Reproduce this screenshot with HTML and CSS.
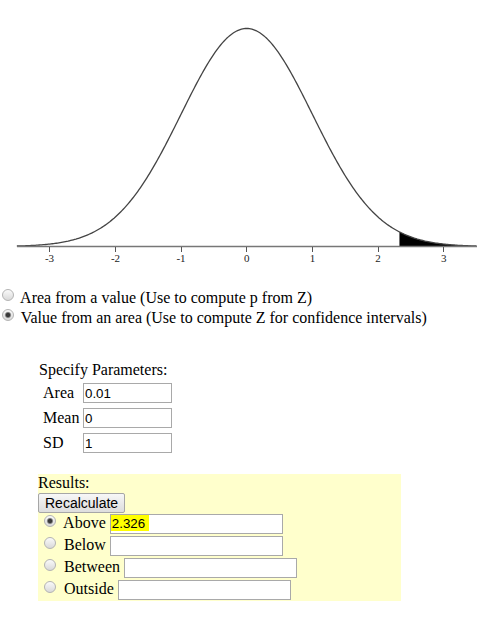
FILE: index.html
```html
<!DOCTYPE html>
<html lang="en">
<head>
  <meta charset="UTF-8">
  <title>Normal Distribution Calculator</title>
  <link rel="stylesheet" href="styles.css">
</head>
<body>
  <svg class="chart" width="489" height="288" id="chart">
    <path id="shade" class="shade" d=""></path>
    <path id="curve" class="curve" d=""></path>
    <line class="axis" x1="17" y1="246.5" x2="477" y2="246.5"></line>
    <g class="ticks">
      <line x1="49.5" y1="247" x2="49.5" y2="252"></line>
      <line x1="115.5" y1="247" x2="115.5" y2="252"></line>
      <line x1="181.5" y1="247" x2="181.5" y2="252"></line>
      <line x1="246.5" y1="247" x2="246.5" y2="252"></line>
      <line x1="312.5" y1="247" x2="312.5" y2="252"></line>
      <line x1="378.5" y1="247" x2="378.5" y2="252"></line>
      <line x1="443.5" y1="247" x2="443.5" y2="252"></line>
    </g>
    <g class="labels">
      <text x="49.5" y="262">-3</text>
      <text x="115.5" y="262">-2</text>
      <text x="181" y="262">-1</text>
      <text x="246.7" y="262">0</text>
      <text x="312.4" y="262">1</text>
      <text x="378" y="262">2</text>
      <text x="443.7" y="262">3</text>
    </g>
  </svg>

  <!-- mode -->
  <div class="modes">
    <label class="mode"><input type="radio" name="mode"> Area from a value (Use to compute p from Z)</label>
    <label class="mode"><input type="radio" name="mode" checked> Value from an area (Use to compute Z for confidence intervals)</label>
  </div>

  <!-- parameters -->
  <div class="params">
    <div class="caption">Specify Parameters:</div>
    <div class="param-grid">
      <span>Area</span><input type="text" value="0.01">
      <span>Mean</span><input type="text" value="0">
      <span>SD</span><input type="text" value="1">
    </div>
  </div>

  <!-- results -->
  <div class="results">
    <div class="caption">Results:</div>
    <button class="recalc">Recalculate</button>
    <label class="res"><input type="radio" name="res" checked> Above <input type="text" class="res-input found" value="2.326"></label>
    <label class="res"><input type="radio" name="res"> Below <input type="text" class="res-input"></label>
    <label class="res"><input type="radio" name="res"> Between <input type="text" class="res-input"></label>
    <label class="res"><input type="radio" name="res"> Outside <input type="text" class="res-input"></label>
  </div>

  <script>
    var cx = 246.7, unit = 65.67, base = 246.5, scale = 546.5;

    function px(z) { return cx + unit * z; }
    function py(z) { return base - scale * Math.exp(-z * z / 2) / Math.sqrt(2 * Math.PI); }

    function curvePath(from, to) {
      var d = '';
      for (var z = from; z <= to + 0.0001; z += 0.02) {
        d += (d ? ' L' : 'M') + px(z).toFixed(2) + ',' + py(z).toFixed(2);
      }
      return d;
    }

    document.getElementById('curve').setAttribute('d', curvePath(-3.5, 3.5));
    document.getElementById('shade').setAttribute('d',
      'M' + px(2.326).toFixed(2) + ',' + base + ' L' + curvePath(2.326, 3.5).slice(1) +
      ' L' + px(3.5).toFixed(2) + ',' + base + ' Z');
  </script>
</body>
</html>
```

FILE: styles.css
```css
body {
  margin: 0;
  font-family: "Liberation Serif", "Times New Roman", serif;
  font-size: 16px;
  color: #000;
  background: #fff;
}
.chart {
  display: block;
}
.curve {
  fill: none;
  stroke: #444;
  stroke-width: 1.3;
}
.shade {
  fill: #000;
}
.axis {
  stroke: #777;
  stroke-width: 1.6;
}
.ticks line {
  stroke: #555;
  stroke-width: 1;
}
.labels text {
  font-family: "Liberation Serif", serif;
  font-size: 11px;
  fill: #222;
  text-anchor: middle;
}
input[type="radio"] {
  appearance: none;
  -webkit-appearance: none;
  width: 12px;
  height: 12px;
  margin: 0 3px 0 2px;
  border: 1px solid #b3b3b3;
  border-radius: 50%;
  background: linear-gradient(#fafafa, #d9d9d9);
  vertical-align: 2px;
}
input[type="radio"]:checked {
  background: radial-gradient(circle, #3a3a3a 0, #3a3a3a 1.8px, #8a8a8a 2.6px, transparent 3.6px), linear-gradient(#fafafa, #d9d9d9);
}
input[type="text"] {
  box-sizing: border-box;
  height: 20px;
  padding: 1px 1px;
  border: 1px solid #a9a9a9;
  font-family: "Liberation Sans", Arial, sans-serif;
  font-size: 13.33px;
  background: #fff;
  color: #000;
  margin: 0;
}
.mode {
  display: block;
  line-height: 20px;
}
.params {
  margin-top: 33px;
  padding-left: 39px;
}
.caption {
  line-height: 18px;
}
.params .caption {
  margin-bottom: 4px;
}
.param-grid {
  display: grid;
  grid-template-columns: 40px 89px;
  row-gap: 5px;
  align-items: baseline;
  padding-left: 4px;
}
.param-grid input {
  width: 89px;
}
.results {
  width: 363px;
  margin: 21px 0 0 38px;
  background: #ffffcc;
}
.recalc {
  display: block;
  box-sizing: border-box;
  width: 87px;
  height: 20px;
  margin-top: 1px;
  padding: 0 6px;
  border: 1px solid #a6a6a6;
  border-radius: 2px;
  background: linear-gradient(#f7f7f7, #dddddd);
  font-family: "Liberation Sans", Arial, sans-serif;
  font-size: 14px;
  color: #000;
}
.res {
  display: block;
  height: 22px;
  line-height: 20px;
}
.res input[type="radio"] {
  margin: 0 4px 0 6px;
  vertical-align: 1px;
}
.res-input {
  width: 173px;
  margin-top: 1px;
}
.res-input.found {
  background: linear-gradient(#ffff00, #ffff00) no-repeat 0 0 / 38px 16px, #fff;
}
```
